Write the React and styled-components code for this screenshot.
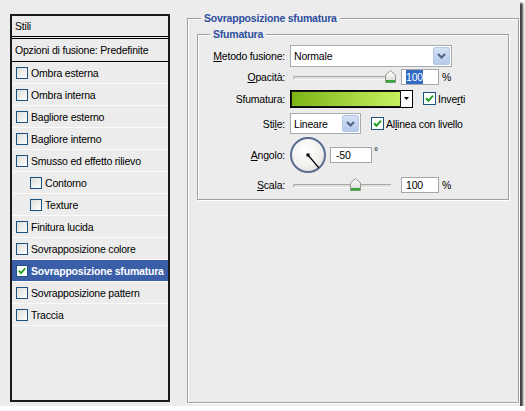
import React from 'react';
import styled, { createGlobalStyle } from 'styled-components';

const Global = createGlobalStyle`
  html, body { margin: 0; padding: 0; background: #fff; }
  body {
    font-family: "Liberation Sans", Arial, sans-serif;
    font-size: 10.5px;
    letter-spacing: -0.2px;
    color: #000;
  }
  u { text-decoration-thickness: 1px; text-underline-offset: 1px; }
`;

const Window = styled.div`
  width: 520px;
  height: 406px;
  box-sizing: border-box;
  background: #ececec;
  box-shadow: 3px 3px 2px rgba(0, 0, 0, 0.75);
  display: flex;
  align-items: flex-start;
  padding: 14px 0 0 10px;
`;

/* ---------- left styles list ---------- */
const Panel = styled.div`
  width: 160px;
  height: 388px;
  box-sizing: border-box;
  border: 2px solid #1b1b1b;
  display: flex;
  flex-direction: column;
  background: #ececec;
`;

const PanelHeader = styled.div`
  height: 23px;
  box-sizing: border-box;
  border-bottom: 3px double #000;
  padding-left: 3px;
  display: flex;
  align-items: center;
`;

const BlendRow = styled.div`
  height: 23px;
  box-sizing: border-box;
  border-bottom: 1px solid #000;
  padding-left: 3px;
  display: flex;
  align-items: center;
`;

const ListItem = styled.div`
  height: 22px;
  box-sizing: border-box;
  border-bottom: 1px solid #fbfbfb;
  padding-left: ${p => (p.$indent ? 18 : 4)}px;
  display: flex;
  align-items: center;
  gap: 3px;
  background: ${p => (p.$selected ? '#3b5ea9' : 'transparent')};
  color: ${p => (p.$selected ? '#fff' : '#000')};
  font-weight: ${p => (p.$selected ? 700 : 400)};
`;

const Box = styled.span`
  width: ${p => p.$size}px;
  height: ${p => p.$size}px;
  box-sizing: border-box;
  border: 1px solid #1c5180;
  background: ${p => (p.$checked ? '#fff' : 'linear-gradient(135deg, #dcdcd7, #ffffff)')};
  display: inline-flex;
  align-items: center;
  justify-content: center;
  flex: none;
`;

const Checkbox = ({ size = 12, checked }) => (
  <Box $size={size} $checked={checked}>
    {checked && (
      <svg width={size - 2} height={size - 2} viewBox="0 0 11 11">
        <path d="M2 5.2 L4.4 7.8 L9 2.6" fill="none" stroke="#21a121" strokeWidth="2" />
      </svg>
    )}
  </Box>
);

/* ---------- right fieldsets ---------- */
const Group = styled.fieldset`
  margin: ${p => p.$margin};
  padding: ${p => p.$padding};
  width: ${p => p.$w}px;
  height: ${p => p.$h}px;
  box-sizing: border-box;
  border: 1px solid #a0a0a0;
  box-shadow: 1px 1px 0 #fff, inset 1px 1px 0 #fff;
  min-width: 0;
`;

const Legend = styled.legend`
  margin-left: ${p => p.$ml}px;
  padding: 0 3px;
  font-weight: 700;
  color: #2d4f9e;
  line-height: 13px;
  background: #ececec;
`;

const Row = styled.div`
  display: flex;
  align-items: center;
  height: ${p => p.$h}px;
  margin-top: ${p => p.$mt}px;
`;

const Label = styled.span`
  width: 87px;
  margin-right: 5px;
  text-align: right;
  flex: none;
`;

const Select = styled.div`
  width: ${p => p.$w}px;
  height: ${p => p.$h}px;
  box-sizing: border-box;
  border: 1px solid #a5acb2;
  background: #fff;
  display: flex;
  align-items: stretch;
`;

const SelectText = styled.span`
  flex: 1;
  padding-left: 3px;
  display: flex;
  align-items: center;
`;

const SelectButton = styled.span`
  width: 17px;
  margin: 1px;
  box-sizing: border-box;
  border: 1px solid #b3c6e8;
  border-radius: 2px;
  background: linear-gradient(#d6e2f5, #b4c9ea);
  display: flex;
  align-items: center;
  justify-content: center;
`;

const Chevron = () => (
  <svg width="9" height="6" viewBox="0 0 9 6">
    <path d="M1 1 L4.5 4.5 L8 1" fill="none" stroke="#4d6185" strokeWidth="2" />
  </svg>
);

const SliderWrap = styled.div`
  position: relative;
  width: 108px;
  height: 100%;
  flex: none;
`;

const Track = styled.div`
  position: absolute;
  left: 3px;
  right: 6px;
  top: 50%;
  height: 4px;
  margin-top: -1px;
  box-sizing: border-box;
  border: 1px solid #a8a8a4;
  border-bottom-color: #f8f8f8;
  border-right-color: #f0f0f0;
  border-radius: 2px;
  background: #e2e0da;
`;

const Thumb = styled.svg`
  position: absolute;
  top: 50%;
  margin-top: -7px;
`;

const Slider = ({ center }) => (
  <SliderWrap>
    <Track />
    <Thumb width="11" height="13" viewBox="0 0 11 13" style={{ left: center - 5.5 }}>
      <defs>
        <linearGradient id="tg" x1="0" y1="0" x2="0" y2="1">
          <stop offset="0" stopColor="#ffffff" />
          <stop offset="1" stopColor="#d8d8d4" />
        </linearGradient>
      </defs>
      <path d="M0.5 5 L5.5 0.5 L10.5 5 L10.5 12.5 L0.5 12.5 Z" fill="url(#tg)" stroke="#8b9a8b" />
      <rect x="1" y="10" width="9" height="2.5" fill="#3aa33a" />
    </Thumb>
  </SliderWrap>
);

const NumberBox = styled.div`
  width: ${p => p.$w}px;
  height: 16px;
  box-sizing: border-box;
  border: 1px solid #a7a6aa;
  background: #fff;
  padding-left: ${p => p.$pl}px;
  margin-left: ${p => p.$ml}px;
  display: flex;
  align-items: center;
  flex: none;
`;

const Highlight = styled.span`
  background: #316ac5;
  color: #fff;
  padding: 1px 0;
`;

const Unit = styled.span`
  margin-left: 3px;
`;

const Degree = styled.span`
  align-self: flex-start;
  margin-top: 8px;
  margin-left: 2px;
`;

const GradientPicker = styled.div`
  width: 123px;
  height: 18px;
  box-sizing: border-box;
  border: 1px solid #000;
  background: #fff;
  display: flex;
`;

const GradientFill = styled.div`
  flex: 1;
  border: 1px solid #1a1a1a;
  background: linear-gradient(90deg, #7cb416, #c6f160);
`;

const GradientArrow = styled.div`
  width: 11px;
  display: flex;
  align-items: center;
  justify-content: center;
`;

const CheckLabel = styled.label`
  display: flex;
  align-items: center;
  gap: 2px;
  margin-left: ${p => p.$ml}px;
`;

const Dial = styled.div`
  width: 36px;
  height: 36px;
  box-sizing: border-box;
  border-radius: 50%;
  border: 2px solid #5a6d93;
  background: radial-gradient(circle at 40% 35%, #ffffff 0%, #f1f1ee 55%, #d9d9d5 100%);
  flex: none;
  display: flex;
`;

const items = [
  { t: 'Ombra esterna' },
  { t: 'Ombra interna' },
  { t: 'Bagliore esterno' },
  { t: 'Bagliore interno' },
  { t: 'Smusso ed effetto rilievo' },
  { t: 'Contorno', indent: true },
  { t: 'Texture', indent: true },
  { t: 'Finitura lucida' },
  { t: 'Sovrapposizione colore' },
  { t: 'Sovrapposizione sfumatura', selected: true },
  { t: 'Sovrapposizione pattern' },
  { t: 'Traccia' },
];

export default function App() {
  return (
    <>
      <Global />
      <Window>
        <Panel>
          <PanelHeader>Stili</PanelHeader>
          <BlendRow>Opzioni di fusione: Predefinite</BlendRow>
          {items.map(it => (
            <ListItem key={it.t} $indent={it.indent} $selected={it.selected}>
              <Checkbox size={12} checked={it.selected} />
              <span>{it.t}</span>
            </ListItem>
          ))}
        </Panel>

        <Group $w={332} $h={391} $margin="-2px 0 0 17px" $padding="0">
          <Legend $ml={13}>Sovrapposizione sfumatura</Legend>
          <Group $w={312} $h={172} $margin="3px 0 0 9px" $padding="4px 0 0 0">
            <Legend $ml={12}>Sfumatura</Legend>

            <Row $h={22} $mt={0}>
              <Label><u>M</u>etodo fusione:</Label>
              <Select $w={162} $h={22}>
                <SelectText>Normale</SelectText>
                <SelectButton><Chevron /></SelectButton>
              </Select>
            </Row>

            <Row $h={18} $mt={1}>
              <Label><u>O</u>pacità:</Label>
              <Slider center={100} />
              <NumberBox $w={38} $pl={4} $ml={3}>
                <Highlight>100</Highlight>
              </NumberBox>
              <Unit>%</Unit>
            </Row>

            <Row $h={19} $mt={3}>
              <Label>Sfumatura:</Label>
              <GradientPicker>
                <GradientFill />
                <GradientArrow>
                  <svg width="5" height="3" viewBox="0 0 5 3">
                    <path d="M0 0 H5 L2.5 3 Z" fill="#000" />
                  </svg>
                </GradientArrow>
              </GradientPicker>
              <CheckLabel $ml={10}>
                <Checkbox size={13} checked />
                <span>Inve<u>r</u>ti</span>
              </CheckLabel>
            </Row>

            <Row $h={23} $mt={4}>
              <Label>Sti<u>l</u>e:</Label>
              <Select $w={71} $h={21}>
                <SelectText>Lineare</SelectText>
                <SelectButton><Chevron /></SelectButton>
              </Select>
              <CheckLabel $ml={10}>
                <Checkbox size={13} checked />
                <span>Al<u>l</u>inea con livello</span>
              </CheckLabel>
            </Row>

            <Row $h={35} $mt={2}>
              <Label><u>A</u>ngolo:</Label>
              <Dial>
                <svg width="32" height="32" viewBox="0 0 32 32">
                  <line x1="16" y1="16" x2="27" y2="29" stroke="#000" strokeWidth="1.2" />
                  <rect x="14.5" y="14.5" width="3" height="3" fill="#000" />
                </svg>
              </Dial>
              <NumberBox $w={42} $pl={5} $ml={4}>-50</NumberBox>
              <Degree>°</Degree>
            </Row>

            <Row $h={18} $mt={4}>
              <Label><u>S</u>cala:</Label>
              <Slider center={65} />
              <NumberBox $w={38} $pl={4} $ml={3}>100</NumberBox>
              <Unit>%</Unit>
            </Row>
          </Group>
        </Group>
      </Window>
    </>
  );
}
